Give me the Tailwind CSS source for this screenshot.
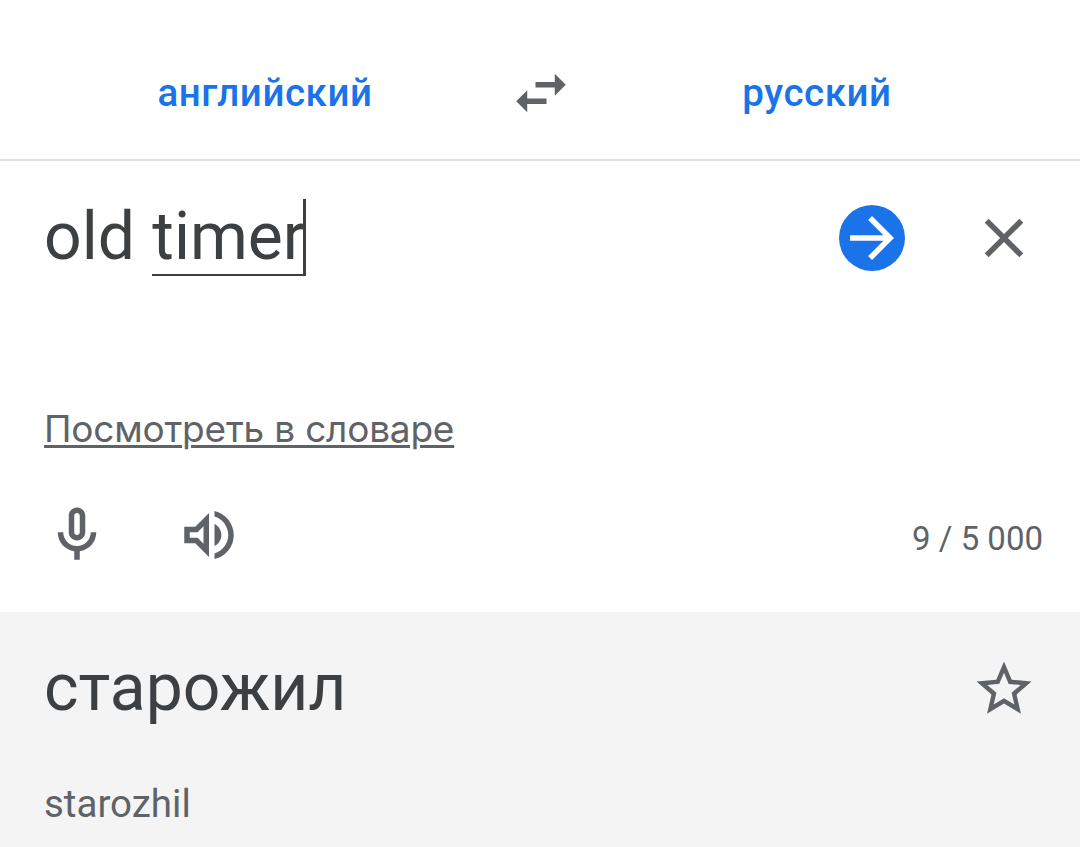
<!DOCTYPE html>
<html lang="ru">
<head>
    <meta charset="UTF-8">
    <meta name="viewport" content="width=device-width, initial-scale=1.0">
    <title>Переводчик</title>
    <script src="https://cdn.jsdelivr.net/npm/@tailwindcss/browser@4"></script>
</head>
<body class="bg-white font-['Roboto',sans-serif] text-[#5f6368]">
    <div class="h-[847px] flex flex-col overflow-hidden">
        <!-- Language bar -->
        <header class="h-[161px] shrink-0 flex items-start border-b-2 border-[#e0e0e0] pl-[22px] pr-5 pt-[60px] text-[38.5px] leading-[66px] font-medium text-[#1a73e8]">
            <button class="flex-1 text-center tracking-[0.55px]">английский</button>
            <button class="text-[#5f6368]" aria-label="Поменять языки">
                <svg class="size-[66px]" viewBox="0 0 24 24" fill="currentColor"><path d="M6.99 11L3 15l3.99 4v-3H14v-2H6.99v-3zM21 9l-3.99-4v3H10v2h7.01v3L21 9z"/></svg>
            </button>
            <button class="flex-1 text-center tracking-[0.55px]">русский</button>
        </header>

        <!-- Source text -->
        <main class="h-[451px] shrink-0 flex flex-col pl-11 pr-[38px]">
            <div class="flex items-start pt-[38px]">
                <div class="flex flex-1 text-[66px] leading-[75px] text-[#3c4043]">
                    <span class="whitespace-pre pr-px">old </span>
                    <span class="relative h-[77px] w-[154px] border-b-2 border-[#3c4043]">timer<span class="absolute right-0 top-0 h-[77px] w-[3px] bg-[#3c4043]"></span></span>
                </div>
                <button class="mt-[6px] size-[66px] rounded-full bg-[#1a73e8] text-white" aria-label="Перевести">
                    <svg class="size-[66px]" viewBox="0 0 24 24" fill="currentColor"><path d="M12 4l-1.41 1.41L16.17 11H4v2h12.17l-5.58 5.59L12 20l8-8z"/></svg>
                </button>
                <button class="mt-[6px] ml-[66px] mr-[5px] size-[66px]" aria-label="Очистить">
                    <svg class="size-[66px]" viewBox="0 0 24 24" fill="currentColor"><path d="M19 6.41L17.59 5 12 10.59 6.41 5 5 6.41 10.59 12 5 17.59 6.41 19 12 13.41 17.59 19 19 17.59 13.41 12z"/></svg>
                </button>
            </div>

            <a href="#" class="mt-[128px] self-start whitespace-nowrap font-['Inter',sans-serif] text-[37px] leading-[50px] tracking-[-0.2px] underline decoration-[3px] underline-offset-[3px]">Посмотреть в словаре</a>

            <div class="mt-[48px] flex items-center">
                <button aria-label="Голосовой ввод">
                    <svg class="size-[66px]" viewBox="0 0 24 24" fill="currentColor"><path d="M12 14c1.66 0 3-1.34 3-3V5c0-1.66-1.34-3-3-3S9 3.34 9 5v6c0 1.66 1.34 3 3 3zm-1-9c0-.55.45-1 1-1s1 .45 1 1v6c0 .55-.45 1-1 1s-1-.45-1-1V5zm6 6c0 2.76-2.24 5-5 5s-5-2.24-5-5H5c0 3.53 2.61 6.43 6 6.92V21h2v-3.08c3.39-.49 6-3.39 6-6.92h-2z"/></svg>
                </button>
                <button class="ml-[66px]" aria-label="Прослушать">
                    <svg class="size-[66px]" viewBox="0 0 24 24" fill="currentColor"><path d="M3 9v6h4l5 5V4L7 9H3zm7-.17v6.34L7.83 13H5v-2h2.83L10 8.83zM16.5 12c0-1.77-1.02-3.29-2.5-4.03v8.05c1.48-.73 2.5-2.25 2.5-4.02zM14 3.23v2.06c2.89.86 5 3.54 5 6.71s-2.11 5.85-5 6.71v2.06c4.01-.91 7-4.49 7-8.77s-2.99-7.86-7-8.77z"/></svg>
                </button>
                <span class="ml-auto -mr-px pt-2 text-[33px] leading-[44px]">9 / 5 000</span>
            </div>
        </main>

        <!-- Translation -->
        <section class="flex-1 bg-[#f4f4f4] pl-11 pr-[43px] pt-[38px]">
            <div class="flex h-[77px] items-start justify-between">
                <p class="text-[66px] leading-[75px] text-[#3c4043]">старожил</p>
                <button class="mt-[6px]" aria-label="Сохранить">
                    <svg class="size-[66px]" viewBox="0 0 24 24" fill="currentColor"><path d="M22 9.24l-7.19-.62L12 2 9.19 8.63 2 9.24l5.46 4.73L5.82 21 12 17.27 18.18 21l-1.63-7.03L22 9.24zM12 15.4l-3.76 2.27 1-4.28-3.32-2.88 4.38-.38L12 6.1l1.71 4.04 4.38.38-3.32 2.88 1 4.28L12 15.4z"/></svg>
                </button>
            </div>
            <p class="mt-[49px] text-[38.5px] leading-[55px]">starozhil</p>
        </section>
    </div>
</body>
</html>
